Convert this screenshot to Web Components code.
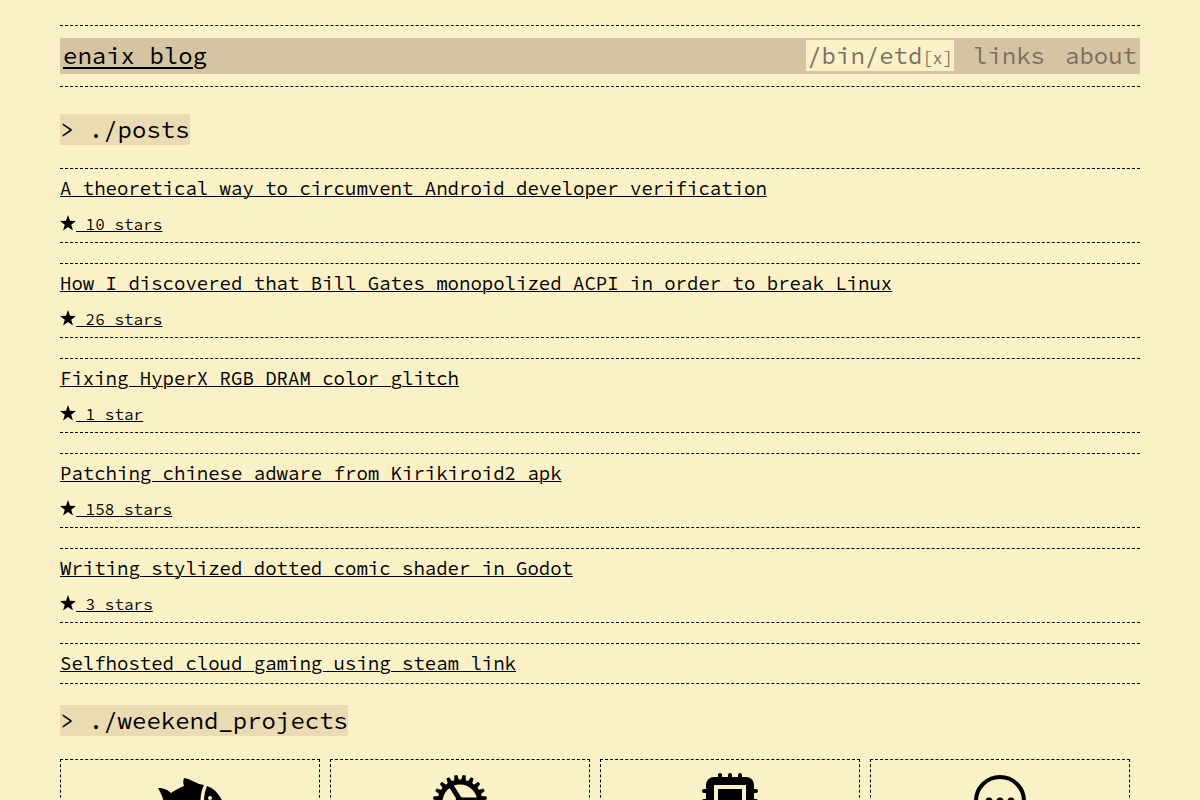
<!DOCTYPE html>
<html lang="en">
<head>
<meta charset="utf-8">
<meta name="viewport" content="width=device-width, initial-scale=1">
<title>enaix blog</title>
<style>
html { background: #fbf1c7; }
body {
  margin: 0;
  padding: 25px 60px;
  overflow-x: hidden;
  color: #000;
  font-family: "Source Code Pro", "Noto Sans Mono CJK JP", "Liberation Mono", monospace;
  --line: 1px dashed #000;
  --large: 24px;
  --medium: 19px;
  --small: 16px;
}
</style>
</head>
<body>
<site-header>
  <nav-link slot="nav" href="#etd" mark="[x]" active>/bin/etd</nav-link>
  <nav-link slot="nav" href="#links">links</nav-link>
  <nav-link slot="nav" href="#about">about</nav-link>
</site-header>
<main>
  <section-title>&gt; ./posts</section-title>
  <post-list>
    <post-item href="#android" stars="10 stars">A theoretical way to circumvent Android developer verification</post-item>
    <post-item href="#acpi" stars="26 stars">How I discovered that Bill Gates monopolized ACPI in order to break Linux</post-item>
    <post-item href="#hyperx" stars="1 star">Fixing HyperX RGB DRAM color glitch</post-item>
    <post-item href="#kirikiroid" stars="158 stars">Patching chinese adware from Kirikiroid2 apk</post-item>
    <post-item href="#godot" stars="3 stars">Writing stylized dotted comic shader in Godot</post-item>
    <post-item href="#steam">Selfhosted cloud gaming using steam link</post-item>
  </post-list>
  <section-title>&gt; ./weekend_projects</section-title>
  <project-grid>
    <project-card icon="fish"></project-card>
    <project-card icon="gear"></project-card>
    <project-card icon="chip"></project-card>
    <project-card icon="chat"></project-card>
  </project-grid>
</main>
<script>
function define(name, render) {
  customElements.define(name, class extends HTMLElement {
    connectedCallback() {
      if (!this.shadowRoot) this.attachShadow({ mode: "open" }).innerHTML = render(this);
    }
  });
}

define("site-header", () => `
  <style>
    :host { display: block; border-top: var(--line); border-bottom: var(--line); padding: 12px 0; }
    header { display: flex; align-items: center; justify-content: space-between; padding: 2px 2px 3px; background: #d5c4a1; font-size: var(--large); line-height: 31px; }
    a { color: inherit; padding: 0 1px; text-decoration-thickness: 2px; text-underline-offset: 3px; }
    nav { display: flex; gap: 18px; }
  </style>
  <header><a href="#home">enaix blog</a><nav><slot name="nav"></slot></nav></header>`);

define("nav-link", el => `
  <style>
    :host { display: block; }
    a { display: block; padding: 0 1px; color: #7c6f64; text-decoration: none; }
    :host([active]) a { background: #fbf1c7; }
    span { font-size: 17px; line-height: 1; }
  </style>
  <a href="${el.getAttribute("href")}"><slot></slot>${el.hasAttribute("mark") ? `<span>${el.getAttribute("mark")}</span>` : ""}</a>`);

define("section-title", () => `
  <style>
    :host { display: block; padding: 27px 0 23px; }
    :host(:not(:first-child)) { padding-top: 21px; }
    h2 { width: fit-content; margin: 0; background: #ebdbb2; font-size: var(--large); font-weight: 400; line-height: 31px; white-space: pre; }
  </style>
  <h2><slot></slot></h2>`);

define("post-list", () => `
  <style>:host { display: flex; flex-direction: column; gap: 20px; }</style>
  <slot></slot>`);

define("post-item", el => `
  <style>
    :host { display: block; border-top: var(--line); border-bottom: var(--line); padding: 7px 0; }
    a { color: inherit; text-decoration-thickness: 1px; }
    h3 { margin: 0; font-size: var(--medium); font-weight: 400; line-height: 25px; }
    p { display: flex; margin: 12px 0 0; font-size: var(--small); line-height: 22px; }
    p a { white-space: pre; }
    svg { width: 16px; height: 16px; margin-top: 2px; }
  </style>
  <h3><a href="${el.getAttribute("href")}"><slot></slot></a></h3>
  ${el.hasAttribute("stars") ? `<p><svg viewBox="0 0 16 16" aria-hidden="true"><path d="M8 0l2 5.8 6 .1-4.8 3.8L13 15.6 8 12l-5 3.6 1.8-5.9L0 5.9l6-.1z"/></svg><a href="${el.getAttribute("href")}-stars"> ${el.getAttribute("stars")}</a></p>` : ""}`);

const teeth = Array.from({ length: 20 }, (_, i) =>
  `<path d="M29.5 9l1-6h3l1 6z" transform="rotate(${i * 18 + 9} 32 30)"/>`).join("");
const icons = {
  fish: `<path d="M0 16c6 0 10 2 13 5 4-3 8-5 13-7-1-3-1-5 0-8 6 1 10 4 15 6l5 1c-4 8-5 21-1 32-13 1-22-4-31-13-3 5-6 8-13 9 4-6 5-11 4-14-1-4-3-7-5-11z"/><path d="M49 14c8 3 13 9 16 17-4 7-9 11-16 13-4-10-4-20 0-30z"/><circle cx="52" cy="26" r="2" fill="#fbf1c7"/>`,
  gear: `${teeth}<circle cx="32" cy="30" r="20" fill="none" stroke="#000" stroke-width="5"/><path d="M22 12l10 16h20M22 48l10-16" fill="none" stroke="#000" stroke-width="5"/><circle cx="32" cy="30" r="5"/>`,
  chip: `<rect x="8" y="5" width="48" height="48" rx="8"/><path d="M22 3v54M32 3v54M42 3v54M6 19h52M6 29h52M6 39h52" stroke="#000" stroke-width="4" stroke-linecap="round"/><path fill="#fbf1c7" d="M16 13h32v32H16z"/><path d="M20 17h24v24H20z"/>`,
  chat: `<circle cx="32" cy="29" r="24" fill="none" stroke="#000" stroke-width="4"/><circle cx="21" cy="29" r="3.5"/><circle cx="32" cy="29" r="3.5"/><circle cx="43" cy="29" r="3.5"/>`
};

define("project-grid", () => `
  <style>:host { display: grid; grid-template-columns: repeat(4, 1fr); gap: 10px; padding-right: 10px; }</style>
  <slot></slot>`);

define("project-card", el => `
  <style>
    :host { display: flex; justify-content: center; border: var(--line); padding: 12px; }
    svg { width: 64px; height: 64px; overflow: visible; }
  </style>
  <svg viewBox="0 0 64 64" aria-hidden="true">${icons[el.getAttribute("icon")]}</svg>`);
</script>
</body>
</html>
